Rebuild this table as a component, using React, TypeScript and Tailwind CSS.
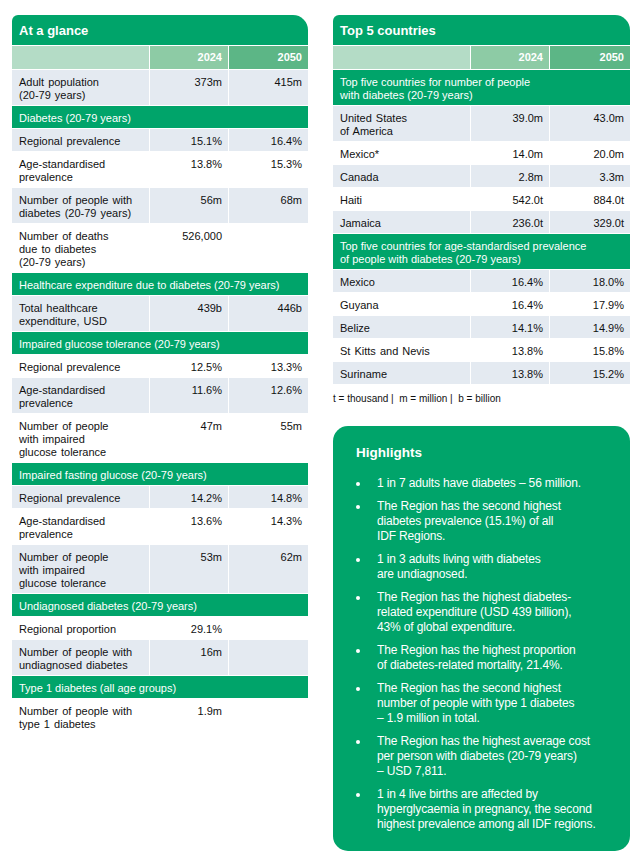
import React from 'react'

type Row =
  | { head: true; lines: string[] }
  | { head?: false; lines: string[]; a?: string; b?: string; shade?: boolean }

const GLANCE: Row[] = [
  { lines: ['Adult population', '(20-79 years)'], a: '373m', b: '415m', shade: true },
  { head: true, lines: ['Diabetes (20-79 years)'] },
  { lines: ['Regional prevalence'], a: '15.1%', b: '16.4%', shade: true },
  { lines: ['Age-standardised', 'prevalence'], a: '13.8%', b: '15.3%' },
  { lines: ['Number of people with', 'diabetes (20-79 years)'], a: '56m', b: '68m', shade: true },
  { lines: ['Number of deaths', 'due to diabetes', '(20-79 years)'], a: '526,000' },
  { head: true, lines: ['Healthcare expenditure due to diabetes (20-79 years)'] },
  { lines: ['Total healthcare', 'expenditure, USD'], a: '439b', b: '446b', shade: true },
  { head: true, lines: ['Impaired glucose tolerance (20-79 years)'] },
  { lines: ['Regional prevalence'], a: '12.5%', b: '13.3%' },
  { lines: ['Age-standardised', 'prevalence'], a: '11.6%', b: '12.6%', shade: true },
  { lines: ['Number of people', 'with impaired', 'glucose tolerance'], a: '47m', b: '55m' },
  { head: true, lines: ['Impaired fasting glucose (20-79 years)'] },
  { lines: ['Regional prevalence'], a: '14.2%', b: '14.8%', shade: true },
  { lines: ['Age-standardised', 'prevalence'], a: '13.6%', b: '14.3%' },
  { lines: ['Number of people', 'with impaired', 'glucose tolerance'], a: '53m', b: '62m', shade: true },
  { head: true, lines: ['Undiagnosed diabetes (20-79 years)'] },
  { lines: ['Regional proportion'], a: '29.1%' },
  { lines: ['Number of people with', 'undiagnosed diabetes'], a: '16m', shade: true },
  { head: true, lines: ['Type 1 diabetes (all age groups)'] },
  { lines: ['Number of people with', 'type 1 diabetes'], a: '1.9m' },
]

const TOP5: Row[] = [
  { head: true, lines: ['Top five countries for number of people', 'with diabetes (20-79 years)'] },
  { lines: ['United States', 'of America'], a: '39.0m', b: '43.0m', shade: true },
  { lines: ['Mexico*'], a: '14.0m', b: '20.0m' },
  { lines: ['Canada'], a: '2.8m', b: '3.3m', shade: true },
  { lines: ['Haiti'], a: '542.0t', b: '884.0t' },
  { lines: ['Jamaica'], a: '236.0t', b: '329.0t', shade: true },
  { head: true, lines: ['Top five countries for age-standardised prevalence', 'of people with diabetes (20-79 years)'] },
  { lines: ['Mexico'], a: '16.4%', b: '18.0%', shade: true },
  { lines: ['Guyana'], a: '16.4%', b: '17.9%' },
  { lines: ['Belize'], a: '14.1%', b: '14.9%', shade: true },
  { lines: ['St Kitts and Nevis'], a: '13.8%', b: '15.8%' },
  { lines: ['Suriname'], a: '13.8%', b: '15.2%', shade: true },
]

const HIGHLIGHTS: string[][] = [
  ['1 in 7 adults have diabetes – 56 million.'],
  ['The Region has the second highest', 'diabetes prevalence (15.1%) of all', 'IDF Regions.'],
  ['1 in 3 adults living with diabetes', 'are undiagnosed.'],
  ['The Region has the highest diabetes-', 'related expenditure (USD 439 billion),', '43% of global expenditure.'],
  ['The Region has the highest proportion', 'of diabetes-related mortality, 21.4%.'],
  ['The Region has the second highest', 'number of people with type 1 diabetes', '– 1.9 million in total.'],
  ['The Region has the highest average cost', 'per person with diabetes (20-79 years)', '– USD 7,811.'],
  ['1 in 4 live births are affected by', 'hyperglycaemia in pregnancy, the second', 'highest prevalence among all IDF regions.'],
]

function Lines({ lines }: { lines: string[] }) {
  return (
    <>
      {lines.map((l) => (
        <div key={l} className="whitespace-nowrap">{l}</div>
      ))}
    </>
  )
}

function DataCard({ title, rows }: { title: string; rows: Row[] }) {
  return (
    <div className="flex flex-col gap-px bg-white text-[11px] leading-[13px]">
      <div className="flex h-[30px] items-center rounded-tl-[6px] rounded-tr-[15px] bg-[#00a46a] px-[7px] text-[13px] font-bold text-white">
        {title}
      </div>
      <div className="grid h-[23px] grid-cols-[137px_78px_1fr] gap-x-px font-bold text-white">
        <div className="bg-[#b4dcc6]" />
        <div className="flex items-center justify-end bg-[#8dcba5] pr-[6px]">2024</div>
        <div className="flex items-center justify-end bg-[#5cb686] pr-[6px]">2050</div>
      </div>
      {rows.map((r, i) =>
        r.head ? (
          <div key={i} className="bg-[#00a46a] px-[7px] pb-[3px] pt-[6px] text-white">
            <Lines lines={r.lines} />
          </div>
        ) : (
          <div key={i} className="grid grid-cols-[137px_78px_1fr] gap-x-px text-[#111]">
            <div className={`${r.shade ? 'bg-[#e4eaf1]' : 'bg-white'} pb-[3px] pl-[7px] pt-[6px] [word-spacing:1px]`}>
              <Lines lines={r.lines} />
            </div>
            <div className={`${r.shade ? 'bg-[#e4eaf1]' : 'bg-white'} pr-[6px] pt-[6px] text-right`}>{r.a}</div>
            <div className={`${r.shade ? 'bg-[#e4eaf1]' : 'bg-white'} pr-[6px] pt-[6px] text-right`}>{r.b}</div>
          </div>
        )
      )}
    </div>
  )
}

export default function App() {
  return (
    <div className="flex min-h-[864px] gap-[25px] bg-white px-[12px] pt-[15px] font-['Liberation_Sans',Arial,sans-serif]">
      <div className="w-[296px]">
        <DataCard title="At a glance" rows={GLANCE} />
      </div>

      <div className="w-[297px]">
        <DataCard title="Top 5 countries" rows={TOP5} />
        <p className="mt-[9px] text-[10px] leading-[12px] text-[#111]">
          t = thousand |&nbsp; m = million |&nbsp; b = billion
        </p>

        {/* Highlights */}
        <div className="mt-[21px] rounded-[15px] bg-[#00a46a] pb-[19px] pl-[23px] pr-[8px] pt-[19px] text-white">
          <div className="text-[13.5px] font-bold leading-[16px]">Highlights</div>
          <ul className="mt-[15px] flex flex-col gap-[8px] text-[12px] leading-[15px] tracking-[-0.15px]">
            {HIGHLIGHTS.map((h, i) => (
              <li key={i} className="flex">
                <span className="flex h-[15px] w-[21px] shrink-0 items-center">
                  <span className="h-[4px] w-[4px] rounded-full bg-white" />
                </span>
                <span>
                  <Lines lines={h} />
                </span>
              </li>
            ))}
          </ul>
        </div>
      </div>
    </div>
  )
}
